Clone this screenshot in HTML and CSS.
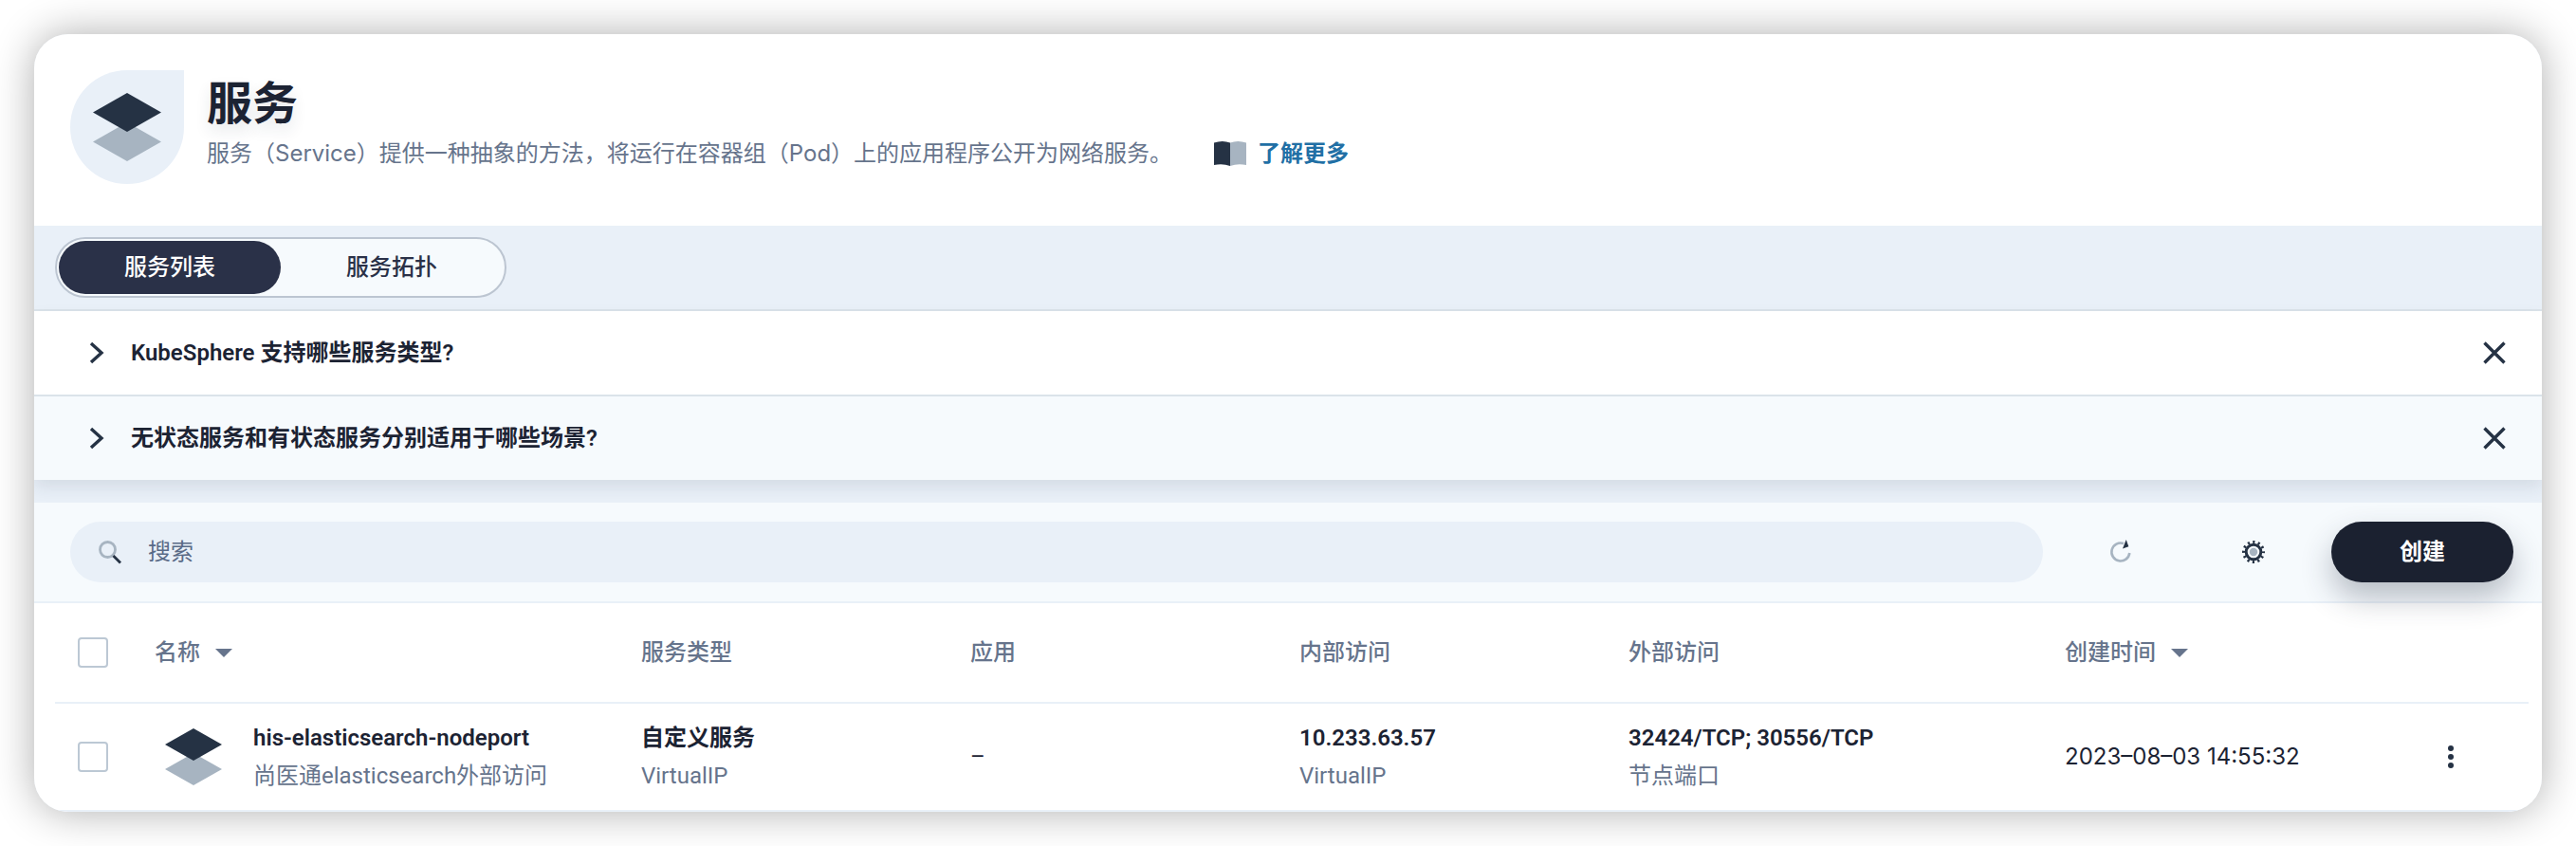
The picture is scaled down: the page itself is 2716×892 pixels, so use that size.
FILE: index.html
```html
<!DOCTYPE html>
<html lang="zh-CN">
<head>
<meta charset="utf-8">
<meta name="viewport" content="width=device-width, initial-scale=1">
<title>服务</title>
<link rel="stylesheet" href="styles.css">
</head>
<body>
<main class="panel">
  <header class="banner">
    <span class="banner-icon">
      <svg class="icon-layers-lg" viewBox="0 0 72 72" aria-hidden="true"><path class="fill-light" d="M0 51.500 36 31l36 20.500L36 72z"/><path class="fill-dark" d="M0 20.500 36 0l36 20.500L36 41z"/></svg>
    </span>
    <div class="banner-text">
      <h1 class="banner-title">服务</h1>
      <p class="banner-desc">
        <span>服务（Service）提供一种抽象的方法，将运行在容器组（Pod）上的应用程序公开为网络服务。</span>
        <a class="learn-more" href="#docs">
          <svg class="icon-book" viewBox="0 0 34 26" aria-hidden="true"><path class="fill-dark" d="M0 1.500Q9-1.500 17 1.500V26Q9 23 0 25z"/><path class="fill-light" d="M34 1.500Q25-1.500 17 1.500V26Q25 23 34 25z"/></svg>
          <span>了解更多</span>
        </a>
      </p>
    </div>
  </header>

  <nav class="tab-bar">
    <div class="tabs">
      <button class="tab tab-active" type="button">服务列表</button>
      <button class="tab" type="button">服务拓扑</button>
    </div>
  </nav>

  <section class="faq">
    <div class="faq-item">
      <button class="faq-toggle" type="button">
        <svg class="icon-chevron" viewBox="0 0 16 24" aria-hidden="true"><path class="stroke-dark" d="M2 2l11 10L2 22"/></svg>
        <span>KubeSphere 支持哪些服务类型?</span>
      </button>
      <button class="icon-button" type="button" aria-label="关闭">
        <svg class="icon-close" viewBox="0 0 24 24" aria-hidden="true"><path class="stroke-dark" d="M1.500 1.500l21 21M22.500 1.500l-21 21"/></svg>
      </button>
    </div>
    <div class="faq-item">
      <button class="faq-toggle" type="button">
        <svg class="icon-chevron" viewBox="0 0 16 24" aria-hidden="true"><path class="stroke-dark" d="M2 2l11 10L2 22"/></svg>
        <span>无状态服务和有状态服务分别适用于哪些场景?</span>
      </button>
      <button class="icon-button" type="button" aria-label="关闭">
        <svg class="icon-close" viewBox="0 0 24 24" aria-hidden="true"><path class="stroke-dark" d="M1.500 1.500l21 21M22.500 1.500l-21 21"/></svg>
      </button>
    </div>
  </section>

  <div class="toolbar">
    <label class="search">
      <svg class="icon-md" viewBox="0 0 24 24" aria-hidden="true"><circle cx="9.500" cy="9.500" r="8" fill="none" stroke="#a7b4c1" stroke-width="2.800"/><path d="M15.500 16 23 23.500" stroke="#253244" stroke-width="2.800"/></svg>
      <input class="search-input" type="text" placeholder="搜索" aria-label="搜索">
    </label>
    <button class="tool-button" type="button" aria-label="刷新">
      <svg class="icon-md" viewBox="0 0 24 24" aria-hidden="true"><path d="M15 3A9.500 9.500 0 1 0 21.300 13" fill="none" stroke="#a7b4c1" stroke-width="2.600"/><path class="fill-dark" d="M17.700-1 20.300 6.300 14 8.600z"/></svg>
    </button>
    <button class="tool-button" type="button" aria-label="设置">
      <svg class="icon-md" viewBox="0 0 24 24" aria-hidden="true"><g fill="none" stroke="#253244"><circle cx="12" cy="12" r="10.500" stroke-width="3" stroke-dasharray="2.200 3.298" stroke-dashoffset="1.100"/><circle cx="12" cy="12" r="7.800" stroke-width="3"/></g><circle class="fill-light" cx="12" cy="12" r="4.200"/></svg>
    </button>
    <button class="create-button" type="button">创建</button>
  </div>

  <div class="table-wrap">
    <table class="services">
      <colgroup>
        <col class="col-check"><col class="col-name"><col class="col-data"><col class="col-data"><col class="col-data"><col class="col-ports"><col class="col-time"><col class="col-more">
      </colgroup>
      <thead>
        <tr>
          <th><input class="checkbox" type="checkbox" aria-label="全选"></th>
          <th><button class="sort" type="button">名称<span class="caret"></span></button></th>
          <th>服务类型</th>
          <th>应用</th>
          <th>内部访问</th>
          <th>外部访问</th>
          <th><button class="sort" type="button">创建时间<span class="caret"></span></button></th>
          <th></th>
        </tr>
      </thead>
      <tbody>
        <tr>
          <td><input class="checkbox" type="checkbox" aria-label="选择 his-elasticsearch-nodeport"></td>
          <td>
            <div class="name-cell">
              <svg class="icon-layers" viewBox="0 0 60 60" aria-hidden="true"><path class="fill-light" d="M0 43 30 26l30 17L30 60z"/><path class="fill-dark" d="M0 17 30 0l30 17L30 34z"/></svg>
              <div>
                <a class="cell-title" href="#his-elasticsearch-nodeport">his-elasticsearch-nodeport</a>
                <p class="cell-note">尚医通elasticsearch外部访问</p>
              </div>
            </div>
          </td>
          <td><p class="cell-title">自定义服务</p><p class="cell-note">VirtualIP</p></td>
          <td>–</td>
          <td><p class="cell-title">10.233.63.57</p><p class="cell-note">VirtualIP</p></td>
          <td><p class="cell-title">32424/TCP; 30556/TCP</p><p class="cell-note">节点端口</p></td>
          <td class="cell-time">2023–08–03 14:55:32</td>
          <td>
            <button class="icon-button" type="button" aria-label="更多操作">
              <svg class="icon-more" viewBox="0 0 6 24" aria-hidden="true"><circle class="fill-dark" cx="3" cy="3" r="3"/><circle class="fill-dark" cx="3" cy="12" r="3"/><circle class="fill-dark" cx="3" cy="21" r="3"/></svg>
            </button>
          </td>
        </tr>
      </tbody>
    </table>
  </div>
</main>
</body>
</html>
```
FILE: styles.css
```css
:root {
  --ink: #1c2333;
  --icon-dark: #253244;
  --icon-light: #a7b4c1;
  --muted: #66748c;
  --mist: #e9f0f8;
  --pale: #f6fafd;
  --line: #dbe3ea;
}

* {
  box-sizing: border-box;
}

body {
  margin: 0;
  padding: 36px;
  background: #fff;
  color: var(--ink);
  font-family: Roboto, "Noto Sans CJK SC", sans-serif;
  font-size: 24px;
  line-height: 40px;
}

h1,
p {
  margin: 0;
}

button {
  padding: 0;
  border: 0;
  background: none;
  color: inherit;
  font: inherit;
  cursor: pointer;
}

a {
  color: inherit;
  text-decoration: none;
}

svg {
  display: block;
  flex: none;
  overflow: visible;
}

.fill-dark {
  fill: var(--icon-dark);
}

.fill-light {
  fill: var(--icon-light);
}

.stroke-dark {
  fill: none;
  stroke: var(--icon-dark);
  stroke-width: 3.4;
}

.panel {
  overflow: hidden;
  border-radius: 36px;
  background: var(--mist);
  box-shadow: 0 0 44px rgba(0, 0, 0, 0.32);
}

.banner {
  display: flex;
  gap: 24px;
  padding: 38px 38px 44px;
  background: #fff;
}

.banner-icon {
  display: flex;
  flex: none;
  align-items: center;
  justify-content: center;
  width: 120px;
  height: 120px;
  border-radius: 60px 0 60px 60px;
  background: var(--mist);
}

.icon-layers-lg {
  width: 72px;
  height: 72px;
}

.banner-title {
  font-size: 48px;
  font-weight: 600;
  line-height: 72px;
  text-shadow: 0 8px 16px rgba(36, 46, 66, 0.12);
}

.banner-desc {
  display: flex;
  align-items: center;
  gap: 44px;
  color: var(--muted);
  font-family: Inter, "Noto Sans CJK SC", sans-serif;
  line-height: 32px;
}

.learn-more {
  display: flex;
  align-items: center;
  gap: 12px;
  color: #216fa5;
  font-weight: 600;
}

.icon-book {
  width: 34px;
  height: 26px;
}

.tab-bar {
  padding: 12px 22px;
  border-bottom: 2px solid var(--line);
}

.tabs {
  display: inline-flex;
  padding: 2px;
  border: 2px solid #bcc5d1;
  border-radius: 32px;
  background: var(--pale);
  vertical-align: top;
}

.tab {
  width: 234px;
  height: 56px;
  border-radius: 28px;
  color: #2a3148;
  font-weight: 500;
}

.tab-active {
  background: #2a3148;
  color: #fff;
}

.faq {
  position: relative;
  box-shadow: 0 8px 16px rgba(36, 46, 66, 0.1);
}

.faq-item {
  display: flex;
  align-items: center;
  justify-content: space-between;
  height: 88px;
  padding: 0 38px 0 58px;
  background: #fff;
}

.faq-item + .faq-item {
  height: 90px;
  border-top: 2px solid var(--line);
  background: var(--pale);
}

.faq-toggle {
  display: flex;
  align-items: center;
  gap: 28px;
  font-weight: 600;
}

.icon-button {
  display: block;
}

.icon-chevron {
  width: 16px;
  height: 24px;
}

.icon-close,
.icon-md {
  width: 24px;
  height: 24px;
}

.toolbar {
  display: flex;
  align-items: center;
  margin-top: 24px;
  padding: 20px 30px 20px 38px;
  border-bottom: 2px solid var(--mist);
  background: var(--pale);
}

.search {
  display: flex;
  flex: 1;
  align-items: center;
  gap: 28px;
  height: 64px;
  margin-right: 12px;
  padding: 0 30px;
  border-radius: 32px;
  background: var(--mist);
}

.search-input {
  flex: 1;
  min-width: 0;
  padding: 0;
  border: 0;
  outline: 0;
  background: none;
  color: var(--ink);
  font: inherit;
}

.search-input::placeholder {
  color: #5a6b87;
  opacity: 1;
}

.tool-button {
  display: flex;
  align-items: center;
  justify-content: center;
  width: 140px;
  height: 64px;
}

.create-button {
  position: relative;
  width: 192px;
  height: 64px;
  margin-left: 12px;
  border-radius: 32px;
  background: #1b2130;
  box-shadow: 0 16px 32px rgba(36, 46, 66, 0.3);
  color: #fff;
  font-weight: 600;
}

.table-wrap {
  padding: 0 14px 0 22px;
  border-bottom: 2px solid var(--mist);
  background: #fff;
}

.services {
  width: 100%;
  border-collapse: separate;
  border-spacing: 0;
  table-layout: fixed;
  text-align: left;
}

.col-check {
  width: 105px;
}

.col-name {
  width: 513px;
}

.col-data {
  width: 347px;
}

.col-ports {
  width: 460px;
}

.col-time {
  width: 404px;
}

.services th {
  height: 106px;
  padding: 0;
  border-bottom: 2px solid var(--mist);
  color: var(--muted);
  font-weight: 500;
}

.services td {
  height: 112px;
  padding: 0;
}

.services th:first-child,
.services td:first-child {
  padding-left: 24px;
}

.services .cell-time {
  font-family: Inter, "Noto Sans CJK SC", sans-serif;
}

.sort {
  display: flex;
  align-items: center;
  gap: 16px;
}

.caret {
  border: 9px solid transparent;
  border-top: 9px solid currentColor;
  border-bottom: 0;
}

.checkbox {
  display: block;
  width: 32px;
  height: 32px;
  margin: 0;
  border: 2px solid #bcc8d4;
  border-radius: 4px;
  background: #fff;
  appearance: none;
}

.name-cell {
  display: flex;
  align-items: center;
  gap: 33px;
  padding-left: 11px;
}

.icon-layers {
  width: 60px;
  height: 60px;
}

.cell-title {
  display: block;
  font-weight: 600;
}

.cell-note {
  color: var(--muted);
}

.icon-more {
  width: 6px;
  height: 24px;
}
```
